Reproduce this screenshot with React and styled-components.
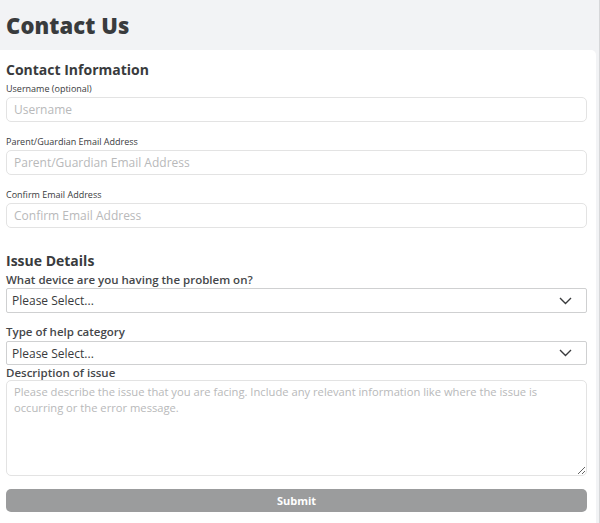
import React from "react";
import styled, { createGlobalStyle } from "styled-components";

const Global = createGlobalStyle`
  html, body { margin: 0; padding: 0; background: #f2f3f5; }
  body { font-family: "Open Sans", "Noto Sans", sans-serif; color: #393b3d; }
  * { box-sizing: border-box; }
`;

const Page = styled.div`
  width: 600px;
  min-height: 523px;
  padding-right: 3px;
  border-right: 1px solid #d6d7d9;
  background: #f2f3f5;
`;

const Header = styled.div`
  height: 50px;
  display: flex;
  align-items: center;
  padding-left: 6px;
`;

const Title = styled.h1`
  margin: 0;
  font-size: 22px;
  font-weight: 800;
  color: #393b3d;
  letter-spacing: 0.1px;
`;

const Card = styled.div`
  background: #fff;
  border-radius: 0 5px 0 0;
  padding: 10px 9px 11px 6px;
  display: flex;
  flex-direction: column;
`;

const SectionTitle = styled.h2`
  margin: ${(p) => p.$top || 0}px 0 0 0;
  font-size: 14px;
  line-height: 20px;
  font-weight: 700;
  color: #393b3d;
`;

const SmallLabel = styled.label`
  display: block;
  font-size: 9px;
  line-height: 12px;
  margin: ${(p) => p.$top || 0}px 0 2px 0;
  color: #393b3d;
`;

const Label = styled.label`
  display: block;
  font-size: 11.5px;
  line-height: 14px;
  font-weight: 600;
  margin: ${(p) => p.$top || 0}px 0 ${(p) => (p.$bottom ?? 1)}px 0;
  color: #45474a;
`;

const Input = styled.input`
  width: 100%;
  height: 25px;
  border: 1px solid #e3e3e3;
  border-radius: 5px;
  padding: 0 7px;
  font-family: inherit;
  font-size: 12px;
  color: #393b3d;
  outline: none;
  &::placeholder { color: #b8b9ba; }
`;

const SelectBox = styled.div`
  height: ${(p) => p.$h || 25}px;
  border: 1px solid #cfd0d1;
  border-radius: 2px;
  display: flex;
  align-items: center;
  justify-content: space-between;
  padding: 0 14px 0 5px;
  font-size: 12px;
  color: #393b3d;
`;

const TextArea = styled.textarea`
  width: 100%;
  height: 96px;
  border: 1px solid #e3e3e3;
  border-radius: 5px;
  padding: 3px 7px;
  font-family: inherit;
  font-size: 11.2px;
  line-height: 16px;
  resize: vertical;
  display: block;
  outline: none;
  &::placeholder { color: #b8b9ba; }
`;

const Button = styled.button`
  margin-top: 13px;
  height: 23px;
  width: 100%;
  border: none;
  border-radius: 5px;
  background: #9b9c9d;
  color: #fff;
  font-family: inherit;
  font-weight: 700;
  font-size: 11px;
`;

const Chevron = () => (
  <svg width="13" height="8" viewBox="0 0 13 8" fill="none">
    <path d="M1 1l5.5 5.5L12 1" stroke="#393b3d" strokeWidth="1.4" />
  </svg>
);

export default function App() {
  return (
    <Page>
      <Global />
      <Header>
        <Title>Contact Us</Title>
      </Header>
      <Card>
        <SectionTitle>Contact Information</SectionTitle>
        <SmallLabel $top={3}>Username (optional)</SmallLabel>
        <Input placeholder="Username" />
        <SmallLabel $top={14}>Parent/Guardian Email Address</SmallLabel>
        <Input placeholder="Parent/Guardian Email Address" />
        <SmallLabel $top={14}>Confirm Email Address</SmallLabel>
        <Input placeholder="Confirm Email Address" />
        <SectionTitle $top={23}>Issue Details</SectionTitle>
        <Label $top={2}>What device are you having the problem on?</Label>
        <SelectBox>
          <span>Please Select...</span>
          <Chevron />
        </SelectBox>
        <Label $top={12} $bottom={2}>Type of help category</Label>
        <SelectBox $h={24}>
          <span>Please Select...</span>
          <Chevron />
        </SelectBox>
        <Label $top={1} $bottom={0}>Description of issue</Label>
        <TextArea placeholder="Please describe the issue that you are facing. Include any relevant information like where the issue is occurring or the error message." />
        <Button>Submit</Button>
      </Card>
    </Page>
  );
}
